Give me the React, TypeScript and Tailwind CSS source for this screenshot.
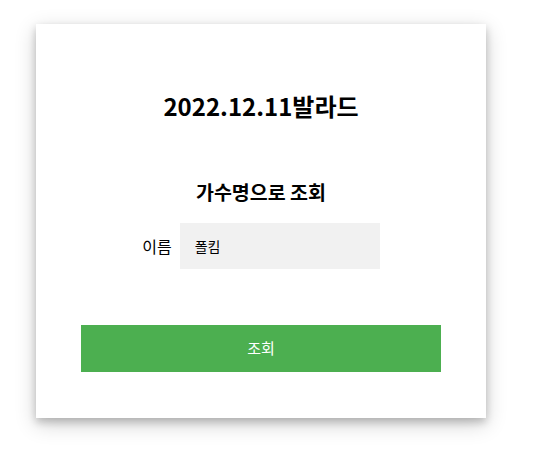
export default function App() {
  return (
    <div className="min-h-[457px] bg-white pt-[24px] pl-[36px] font-['Noto_Sans_CJK_KR','Noto_Sans',sans-serif] text-black">
      <div className="w-[450px] bg-white px-[45px] pt-[66px] pb-[46px] shadow-[0_4px_8px_0_rgba(0,0,0,0.2),0_6px_20px_0_rgba(0,0,0,0.19)]">
        <h2 className="text-center text-[24px] font-bold leading-[32px]">2022.12.11발라드</h2>
        <h3 className="mt-[56px] text-center text-[19.5px] font-bold leading-[28px]">가수명으로 조회</h3>
        <div className="mt-[17px] flex items-center justify-center gap-[8px]">
          <label className="text-[16px]">이름</label>
          <input
            defaultValue="폴킴"
            className="h-[46px] w-[200px] bg-[#f1f1f1] px-[15px] text-[14px] outline-none"
          />
        </div>
        <button className="mt-[56px] h-[47px] w-full bg-[#4caf50] text-[15px] text-white">조회</button>
      </div>
    </div>
  );
}
